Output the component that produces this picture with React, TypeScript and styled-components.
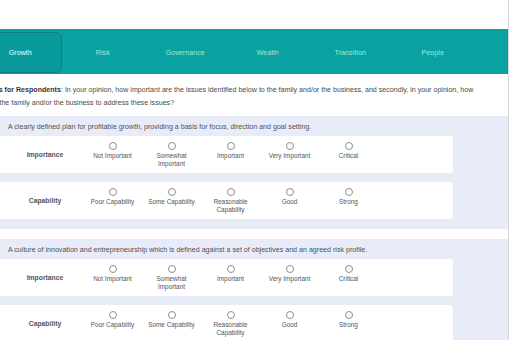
import styled, { createGlobalStyle } from "styled-components";

const Global = createGlobalStyle`
  html, body {
    margin: 0;
    padding: 0;
    background: #ffffff;
    overflow: hidden;
  }
  body {
    font-family: "Liberation Sans", Arial, sans-serif;
    color: #555555;
  }
`

const Frame = styled.div`
  width: 509px;
  height: 340px;
  overflow: hidden;
  border-right: 1px solid #d6d6d6;
  box-sizing: border-box;
`

const Page = styled.div`
  margin-left: -36px;
  width: 544px;
  padding-top: 29px;
`

const TabBar = styled.div`
  display: flex;
  height: 45px;
  box-sizing: border-box;
  padding: 3px 0 1px 15px;
  background: #0aa2a0;
`

const Tab = styled.div<{ $active?: boolean }>`
  width: 82.5px;
  display: flex;
  align-items: center;
  justify-content: center;
  font-size: 7.2px;
  box-sizing: border-box;
  border-radius: 6px;
  color: ${p => (p.$active ? "#eefcfb" : "#9ae9df")};
  background: ${p => (p.$active ? "#099b9b" : "transparent")};
  border: 1px solid ${p => (p.$active ? "#0d7e87" : "transparent")};
`

const Intro = styled.p`
  margin: 0;
  padding: 10px 30px 6px 1.5px;
  text-indent: -3.5px;
  font-size: 7.1px;
  line-height: 13px;
  color: #4a4a4a;
  b {
    color: #333333;
  }
`

const Section = styled.div`
  background: #e7ecf8;
  padding: 4px 0 10px;
  margin-bottom: 10px;
`

const Desc = styled.div`
  padding-left: 44px;
  font-size: 7.1px;
  line-height: 14px;
  color: #505050;
`

const Card = styled.div<{ $first?: boolean }>`
  margin: ${p => (p.$first ? "2px" : "9px")} 0 0 32px;
  width: 457px;
  height: 37px;
  background: #ffffff;
  border-radius: 3px;
  display: flex;
  align-items: stretch;
`

const RowLabel = styled.div`
  width: 87px;
  box-sizing: border-box;
  padding-left: 11px;
  display: flex;
  align-items: center;
  justify-content: center;
  font-size: 6.8px;
  font-weight: bold;
  color: #555555;
`

const Option = styled.div`
  width: 59px;
  display: flex;
  flex-direction: column;
  align-items: center;
  padding-top: 6px;
`

const Radio = styled.span`
  width: 6px;
  height: 6px;
  border: 1px solid #8f8f8f;
  border-radius: 50%;
  background: #ffffff;
`

const OptionText = styled.span`
  margin-top: 2px;
  max-width: 54px;
  text-align: center;
  font-size: 6.4px;
  line-height: 8px;
  color: #555555;
`

const tabs = ["Growth", "Risk", "Governance", "Wealth", "Transition", "People"]

const importance = ["Not Important", "Somewhat Important", "Important", "Very Important", "Critical"]
const capability = ["Poor Capability", "Some Capability", "Reasonable Capability", "Good", "Strong"]

const items = [
  "A clearly defined plan for profitable growth, providing a basis for focus, direction and goal setting.",
  "A culture of innovation and entrepreneurship which is defined against a set of objectives and an agreed risk profile.",
]

function Row({ label, options, first }: { label: string; options: string[]; first?: boolean }) {
  return <Card $first={first}>
    <RowLabel>{label}</RowLabel>
    {options.map(o => (
      <Option key={o}>
        <Radio />
        <OptionText>{o}</OptionText>
      </Option>
    ))}
  </Card>
}

export default function App() {
  return <Frame>
    <Global />
    <Page>
      <TabBar>
        {tabs.map((t, i) => <Tab key={t} $active={i === 0}>{t}</Tab>)}
      </TabBar>
      <Intro>
        <b>Instructions for Respondents</b>: In your opinion, how important are the issues identified below to the family and/or the business, and secondly, in your opinion, how capable is the family and/or the business to address these issues?
      </Intro>
      {items.map(d => (
        <Section key={d}>
          <Desc>{d}</Desc>
          <Row label="Importance" options={importance} first />
          <Row label="Capability" options={capability} />
        </Section>
      ))}
    </Page>
  </Frame>
}
